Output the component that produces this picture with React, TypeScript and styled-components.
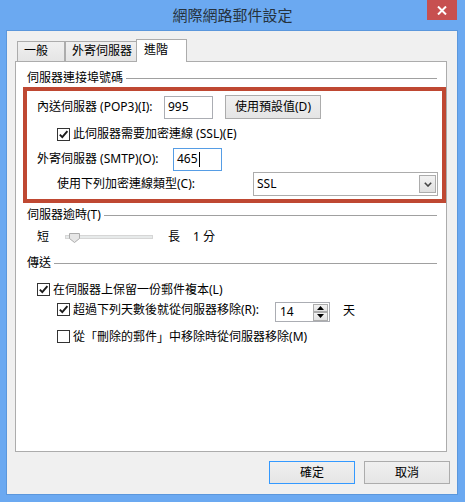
import styled, { createGlobalStyle } from 'styled-components'

const GlobalStyle = createGlobalStyle`
  html, body {
    margin: 0;
    padding: 0;
  }
  body {
    font-family: "Noto Sans", "Noto Sans CJK TC", sans-serif;
    font-size: 12px;
    color: #000;
    background: #ffffff;
  }
`

const Window = styled.div`
  width: 465px;
  height: 502px;
  background: #6ba9f1;
  display: flex;
  flex-direction: column;
  box-sizing: border-box;
  padding-bottom: 8px;
`

const TitleBar = styled.div`
  height: 31px;
  display: grid;
  grid-template-columns: 1fr auto 1fr;
`

const Title = styled.div`
  grid-column: 2;
  font-family: "Noto Sans CJK TC", sans-serif;
  font-size: 15px;
  line-height: 30px;
  color: #25323d;
`

const CloseButton = styled.div`
  grid-column: 3;
  justify-self: end;
  margin-right: 8px;
  width: 30px;
  height: 20px;
  background: #c75050;
  display: flex;
  align-items: center;
  justify-content: center;
`

const Client = styled.div`
  flex: 1;
  margin: 0 8px 0 7px;
  background: #f0f0f0;
  box-shadow: 0 0 0 1px #5b97dc;
  display: flex;
  flex-direction: column;
  padding: 8px 0 0 8px;
`

const TabStrip = styled.div`
  height: 22px;
  display: flex;
  align-items: flex-end;
  padding-left: 2px;
`

const Tab = styled.div<{ $w: number; $active?: boolean }>`
  box-sizing: border-box;
  width: ${p => p.$w}px;
  height: ${p => (p.$active ? 23 : 20)}px;
  margin-left: ${p => (p.$active ? -1 : 0)}px;
  margin-bottom: ${p => (p.$active ? -1 : 0)}px;
  border: 1px solid #acacac;
  border-bottom: none;
  background: ${p => (p.$active ? '#ffffff' : 'linear-gradient(#f0f0f0, #e5e5e5)')};
  padding: ${p => (p.$active ? '2px 0 0 7px' : '1px 0 0 6px')};
  line-height: 16px;
  position: relative;
  z-index: ${p => (p.$active ? 1 : 0)};
`

const Panel = styled.div`
  box-sizing: border-box;
  width: 432px;
  height: 391px;
  background: #ffffff;
  border: 1px solid #acacac;
  padding: 8px 0 0 7px;
  display: flex;
  flex-direction: column;
`

const SectionTitle = styled.div<{ $mt?: number }>`
  height: 16px;
  margin: ${p => p.$mt ?? 0}px 9px 0 4px;
  display: flex;
  align-items: center;
  line-height: 16px;
  white-space: nowrap;

  &::after {
    content: '';
    flex: 1;
    height: 1px;
    margin-left: 3px;
    background: #a0a0a0;
  }
`

const Highlight = styled.div`
  box-sizing: border-box;
  height: 116px;
  margin-top: 1px;
  border: 4px solid #bf4832;
  padding: 3px 0 1px 0;
  display: flex;
  flex-direction: column;
`

const Row = styled.div<{ $h: number; $indent: number; $mt?: number; $top?: boolean }>`
  height: ${p => p.$h}px;
  margin-top: ${p => p.$mt ?? 0}px;
  padding-left: ${p => p.$indent}px;
  display: flex;
  align-items: ${p => (p.$top ? 'flex-start' : 'center')};
  line-height: 16px;
  white-space: nowrap;
`

const Label = styled.span<{ $w?: number }>`
  display: inline-block;
  width: ${p => (p.$w ? `${p.$w}px` : 'auto')};
  flex-shrink: 0;
`

const Bracket = styled.span`
  font-family: "Noto Sans CJK JP", sans-serif;
`

const TextBox = styled.div<{ $w: number; $focus?: boolean }>`
  box-sizing: border-box;
  width: ${p => p.$w}px;
  height: 23px;
  border: 1px solid ${p => (p.$focus ? '#569de5' : '#abadb3')};
  background: #ffffff;
  padding-left: 3px;
  display: flex;
  align-items: center;
`

const Caret = styled.span`
  width: 1px;
  height: 15px;
  background: #000;
  margin-left: 1px;
`

const PushButton = styled.div<{ $w: number; $h: number; $default?: boolean }>`
  box-sizing: border-box;
  width: ${p => p.$w}px;
  height: ${p => p.$h}px;
  border: 1px solid ${p => (p.$default ? '#3399ff' : '#acacac')};
  background: linear-gradient(#f0f0f0, #e5e5e5);
  display: flex;
  align-items: center;
  justify-content: center;
  line-height: 16px;
`

const CheckGroup = styled.div<{ $w?: number; $mt?: number }>`
  display: flex;
  align-items: center;
  height: 13px;
  width: ${p => (p.$w ? `${p.$w}px` : 'auto')};
  margin-top: ${p => p.$mt ?? 0}px;
  flex-shrink: 0;
`

const Box = styled.div`
  box-sizing: border-box;
  width: 13px;
  height: 13px;
  border: 1px solid #333333;
  background: #ffffff;
  margin-right: 3px;
  display: flex;
  align-items: center;
  justify-content: center;
  flex-shrink: 0;
`

const Select = styled.div`
  box-sizing: border-box;
  width: 185px;
  height: 24px;
  border: 1px solid #acacac;
  background: #ffffff;
  display: flex;
  align-items: center;
  padding-left: 3px;
`

const DropButton = styled.div`
  box-sizing: border-box;
  width: 17px;
  height: 18px;
  margin-left: auto;
  margin-right: 1px;
  border: 1px solid #acacac;
  background: linear-gradient(#f2f2f2, #e0e0e0);
  display: flex;
  align-items: center;
  justify-content: center;
`

const Track = styled.div`
  position: relative;
  box-sizing: border-box;
  width: 88px;
  height: 4px;
  margin: 0 15px 0 16px;
  background: #e7eaea;
  border: 1px solid #d6d6d6;
`

const Thumb = styled.svg`
  position: absolute;
  left: 3px;
  top: -3px;
`

const Spin = styled.div`
  box-sizing: border-box;
  width: 55px;
  height: 20px;
  border: 1px solid #abadb3;
  background: #ffffff;
  display: flex;
  align-items: center;
  padding-left: 4px;
  margin-right: 13px;
`

const SpinButtons = styled.div`
  margin-left: auto;
  margin-right: 1px;
  width: 15px;
  height: 17px;
  display: flex;
  flex-direction: column;
`

const SpinHalf = styled.div`
  box-sizing: border-box;
  flex: 1;
  border: 1px solid #acacac;
  background: linear-gradient(#f2f2f2, #e2e2e2);
  display: flex;
  align-items: center;
  justify-content: center;
`

const Footer = styled.div`
  display: flex;
  justify-content: flex-end;
  gap: 9px;
  margin-top: 9px;
  padding-right: 7px;
`

function Check({ on }: { on: boolean }) {
  return (
    <Box>
      {on && (
        <svg width="11" height="11" viewBox="0 0 11 11">
          <path d="M1.8 5.6 L4.3 8.2 L9.4 2.2" fill="none" stroke="#1a1a1a" strokeWidth="1.9" />
        </svg>
      )}
    </Box>
  )
}

function App(): JSX.Element {
  return (
    <>
      <GlobalStyle />
      <Window>
        <TitleBar>
          <Title>網際網路郵件設定</Title>
          <CloseButton>
            <svg width="10" height="9" viewBox="0 0 10 9">
              <path d="M1 0.5 L9 8.5 M9 0.5 L1 8.5" stroke="#fff" strokeWidth="2" />
            </svg>
          </CloseButton>
        </TitleBar>
        <Client>
          <TabStrip>
            <Tab $w={48}>一般</Tab>
            <Tab $w={72}>外寄伺服器</Tab>
            <Tab $w={51} $active>進階</Tab>
          </TabStrip>
          <Panel>
            <SectionTitle>伺服器連接埠號碼</SectionTitle>
            <Highlight>
              <Row $h={26} $indent={10}>
                <Label $w={127}>內送伺服器 (POP3)(I):</Label>
                <TextBox $w={49}>995</TextBox>
                <PushButton $w={96} $h={24} style={{ marginLeft: 12 }}>使用預設值(D)</PushButton>
              </Row>
              <Row $h={28} $indent={30}>
                <CheckGroup>
                  <Check on />
                  此伺服器需要加密連線 (SSL)(E)
                </CheckGroup>
              </Row>
              <Row $h={22} $indent={10}>
                <Label $w={136}>外寄伺服器 (SMTP)(O):</Label>
                <TextBox $w={49} $focus>
                  465
                  <Caret />
                </TextBox>
              </Row>
              <Row $h={28} $indent={30}>
                <Label $w={196}>使用下列加密連線類型(C):</Label>
                <Select>
                  SSL
                  <DropButton>
                    <svg width="8" height="5" viewBox="0 0 8 5">
                      <path d="M0.8 0.8 L4 4 L7.2 0.8" fill="none" stroke="#444" strokeWidth="1.6" />
                    </svg>
                  </DropButton>
                </Select>
              </Row>
            </Highlight>

            <SectionTitle $mt={4}>伺服器逾時(T)</SectionTitle>
            <Row $h={28} $indent={14}>
              <Label>短</Label>
              <Track>
                <Thumb width="11" height="10" viewBox="0 0 11 10">
                  <path d="M0.5 0.5 H10.5 V5.5 L5.5 9.5 L0.5 5.5 Z" fill="#e6e6e6" stroke="#acacac" />
                </Thumb>
              </Track>
              <Label>長</Label>
              <Label style={{ marginLeft: 13 }}>1</Label>
              <Label style={{ marginLeft: 3 }}>分</Label>
            </Row>

            <SectionTitle $mt={4}>傳送</SectionTitle>
            <Row $h={13} $indent={14} $mt={12}>
              <CheckGroup>
                <Check on />
                在伺服器上保留一份郵件複本(L)
              </CheckGroup>
            </Row>
            <Row $h={20} $indent={34} $mt={6} $top>
              <CheckGroup $w={218} $mt={1}>
                <Check on />
                超過下列天數後就從伺服器移除(R):
              </CheckGroup>
              <Spin>
                14
                <SpinButtons>
                  <SpinHalf>
                    <svg width="7" height="4" viewBox="0 0 7 4">
                      <path d="M0 4 L3.5 0 L7 4 Z" fill="#000" />
                    </svg>
                  </SpinHalf>
                  <SpinHalf>
                    <svg width="7" height="4" viewBox="0 0 7 4">
                      <path d="M0 0 L3.5 4 L7 0 Z" fill="#000" />
                    </svg>
                  </SpinHalf>
                </SpinButtons>
              </Spin>
              <Label style={{ marginTop: 1 }}>天</Label>
            </Row>
            <Row $h={13} $indent={34} $mt={8}>
              <CheckGroup>
                <Check on={false} />
                從<Bracket>「</Bracket>刪除的郵件<Bracket>」</Bracket>中移除時從伺服器移除(M)
              </CheckGroup>
            </Row>
          </Panel>
          <Footer>
            <PushButton $w={86} $h={23} $default>確定</PushButton>
            <PushButton $w={86} $h={23}>取消</PushButton>
          </Footer>
        </Client>
      </Window>
    </>
  )
}

export default App
